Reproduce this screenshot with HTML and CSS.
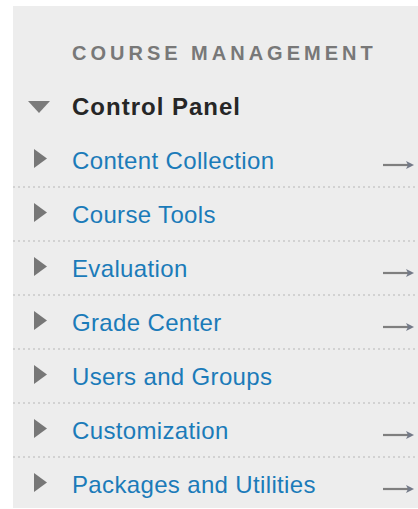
FILE: index.html
```html
<!DOCTYPE html>
<html lang="en">
<head>
<meta charset="utf-8">
<title>Course Management</title>
<link rel="stylesheet" href="styles.css">
</head>
<body>
<nav class="panel">
  <h2 class="panel-title">COURSE MANAGEMENT</h2>
  <div class="row row-open">
    <span class="toggle">
      <svg width="22" height="12" viewBox="0 0 22 12"><polygon points="0,0 22,0 11,12" fill="#7b7b7b"/></svg>
    </span>
    <span class="label label-strong">Control Panel</span>
  </div>
  <ul class="menu">
    <li class="row item">
      <span class="toggle"><svg width="13" height="19" viewBox="0 0 13 19"><polygon points="0,0 13,9.5 0,19" fill="#777777"/></svg></span>
      <a class="label" href="#">Content Collection</a>
      <span class="go"><svg width="31" height="12" viewBox="0 0 31 12"><path d="M0 6H28" stroke="#7f7f7f" stroke-width="2.2"/><path d="M23 2L31 6L23 10L25 6Z" fill="#737a88"/></svg></span>
    </li>
    <li class="row item">
      <span class="toggle"><svg width="13" height="19" viewBox="0 0 13 19"><polygon points="0,0 13,9.5 0,19" fill="#777777"/></svg></span>
      <a class="label" href="#">Course Tools</a>
    </li>
    <li class="row item">
      <span class="toggle"><svg width="13" height="19" viewBox="0 0 13 19"><polygon points="0,0 13,9.5 0,19" fill="#777777"/></svg></span>
      <a class="label" href="#">Evaluation</a>
      <span class="go"><svg width="31" height="12" viewBox="0 0 31 12"><path d="M0 6H28" stroke="#7f7f7f" stroke-width="2.2"/><path d="M23 2L31 6L23 10L25 6Z" fill="#737a88"/></svg></span>
    </li>
    <li class="row item">
      <span class="toggle"><svg width="13" height="19" viewBox="0 0 13 19"><polygon points="0,0 13,9.5 0,19" fill="#777777"/></svg></span>
      <a class="label" href="#">Grade Center</a>
      <span class="go"><svg width="31" height="12" viewBox="0 0 31 12"><path d="M0 6H28" stroke="#7f7f7f" stroke-width="2.2"/><path d="M23 2L31 6L23 10L25 6Z" fill="#737a88"/></svg></span>
    </li>
    <li class="row item">
      <span class="toggle"><svg width="13" height="19" viewBox="0 0 13 19"><polygon points="0,0 13,9.5 0,19" fill="#777777"/></svg></span>
      <a class="label" href="#">Users and Groups</a>
    </li>
    <li class="row item">
      <span class="toggle"><svg width="13" height="19" viewBox="0 0 13 19"><polygon points="0,0 13,9.5 0,19" fill="#777777"/></svg></span>
      <a class="label" href="#">Customization</a>
      <span class="go"><svg width="31" height="12" viewBox="0 0 31 12"><path d="M0 6H28" stroke="#7f7f7f" stroke-width="2.2"/><path d="M23 2L31 6L23 10L25 6Z" fill="#737a88"/></svg></span>
    </li>
    <li class="row item">
      <span class="toggle"><svg width="13" height="19" viewBox="0 0 13 19"><polygon points="0,0 13,9.5 0,19" fill="#777777"/></svg></span>
      <a class="label" href="#">Packages and Utilities</a>
      <span class="go"><svg width="31" height="12" viewBox="0 0 31 12"><path d="M0 6H28" stroke="#7f7f7f" stroke-width="2.2"/><path d="M23 2L31 6L23 10L25 6Z" fill="#737a88"/></svg></span>
    </li>
  </ul>
</nav>
</body>
</html>
```
FILE: styles.css
```css
html, body {
  margin: 0;
  padding: 0;
  background: #ffffff;
}

body {
  font-family: "Liberation Sans", Arial, sans-serif;
}

.panel {
  margin: 6px 0 0 13px;
  height: 502px;
  overflow: hidden;
  background: #ededed;
}

.panel-title {
  margin: 0;
  height: 74px;
  box-sizing: border-box;
  padding: 20px 0 0 59px;
  display: flex;
  align-items: center;
  font-size: 20px;
  font-weight: bold;
  letter-spacing: 4px;
  color: #787878;
  white-space: nowrap;
}

.row {
  display: flex;
  align-items: center;
  height: 54px;
  box-sizing: border-box;
  padding-right: 4px;
}

.toggle {
  width: 59px;
  flex: none;
  display: flex;
  align-items: center;
  padding-left: 21px;
  box-sizing: border-box;
}

.row-open .toggle {
  padding-left: 15px;
}

.toggle svg {
  display: block;
}

.item .toggle {
  margin-top: -6px;
}

.label {
  font-size: 24px;
  letter-spacing: 0.35px;
  color: #1b7bb9;
  text-decoration: none;
  white-space: nowrap;
}

.label-strong {
  font-weight: bold;
  color: #262626;
  letter-spacing: 1px;
}

.menu {
  list-style: none;
  margin: 0;
  padding: 0;
}

.item {
  background-image: repeating-linear-gradient(to right, #d2d2d2 0 2px, transparent 2px 5px);
  background-size: 100% 2px;
  background-position: left bottom;
  background-repeat: no-repeat;
}

.item:last-child {
  background-image: none;
}

.go {
  margin-left: auto;
  display: flex;
  align-items: center;
  margin-top: 8px;
}

.go svg {
  display: block;
}
```
